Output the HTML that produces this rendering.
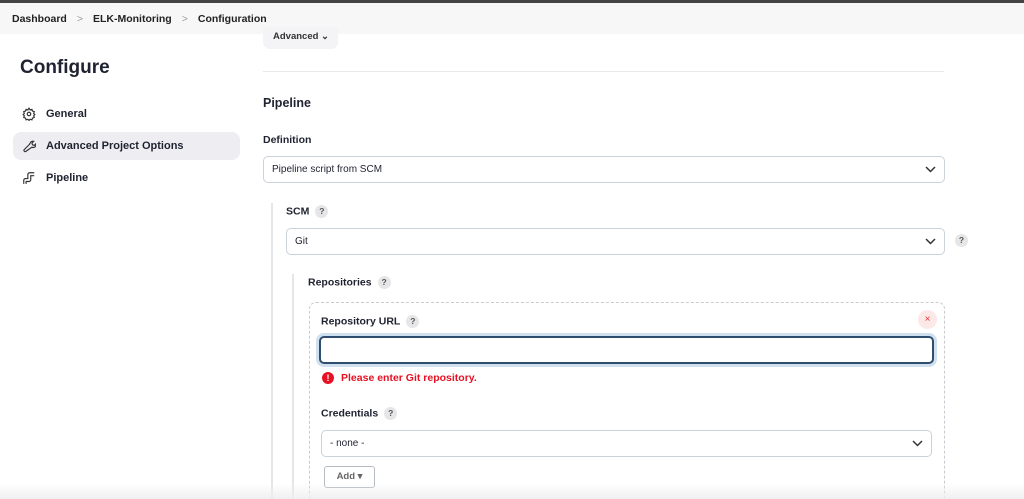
<!DOCTYPE html>
<html style="overflow:hidden;width:1024px;height:499px"><head><style>
*{box-sizing:border-box;margin:0;padding:0}
body{width:1024px;height:499px;overflow:hidden;background:#fff;font-family:"Liberation Sans",sans-serif;color:#1f2230;position:relative}
.top{position:absolute;left:0;top:0;width:1024px;height:3px;background:#444}
.bc{position:absolute;left:0;top:3px;width:1024px;height:31px;background:#f7f7f8;font-size:10.5px;font-weight:bold;display:flex;align-items:center;padding-left:12px;color:#222}
.bc .s{color:#999;margin:0 10px;font-weight:normal}
.abs{position:absolute}
h1{position:absolute;left:20px;top:57px;font-size:19px;font-weight:bold}
.nav{position:absolute;left:13px;width:227px;height:28px;border-radius:8px;font-size:11px;font-weight:bold;display:flex;align-items:center;padding-left:33px}
.nav svg{position:absolute;left:9px;top:7px}
.lbl{position:absolute;font-size:11px;font-weight:bold}
.q{display:inline-block;width:13px;height:13px;border-radius:50%;background:#e6e6e8;color:#555;font-size:8.5px;text-align:center;line-height:13px;margin-left:6px;vertical-align:middle;font-weight:bold}
.sel{position:absolute;height:27px;border:1px solid #c9d1d9;border-radius:5px;font-size:10px;padding-left:8px;display:flex;align-items:center;background:#fff}
.sel svg{position:absolute;right:8px;top:9px}
</style></head><body>
<div class="top"></div>
<div class="bc">Dashboard<span class="s">&gt;</span>ELK-Monitoring<span class="s">&gt;</span>Configuration</div>
<div class="abs" style="left:263px;top:27px;width:75px;height:22px;background:#f4f4f6;border-radius:0 0 7px 7px;font-size:9.5px;font-weight:bold;padding:4px 0 0 10px;color:#333">Advanced ⌄</div>
<div class="abs" style="left:263px;top:71px;width:681px;height:1px;background:#e8e8ea"></div>
<h1>Configure</h1>
<div class="nav" style="top:100px">
<svg width="14" height="14" viewBox="0 0 24 24" fill="none" stroke="#333" stroke-width="2"><circle cx="12" cy="12" r="3"/><path d="M12 2l2 3 3-1 1 3 3 1-1 3 2 2-2 2 1 3-3 1-1 3-3-1-2 2-2-2-3 1-1-3-3-1 1-3-2-2 2-2-1-3 3-1 1-3 3 1z"/></svg>General</div>
<div class="nav" style="top:132px;background:#eeeef2">
<svg width="14" height="14" viewBox="0 0 24 24" fill="none" stroke="#333" stroke-width="2"><path d="M14 7a5 5 0 0 1 6-3l-3 3 1 3 3 1 3-3a5 5 0 0 1-7 6L7 21a2 2 0 0 1-3-3l9-9a5 5 0 0 1 1-2z"/></svg>Advanced Project Options</div>
<div class="nav" style="top:164px">
<svg width="14" height="14" viewBox="0 0 24 24" fill="none" stroke="#333" stroke-width="2"><path d="M3 22v-6a3 3 0 0 1 3-3h4V6a3 3 0 0 1 3-3h8M7 22v-4h5a3 3 0 0 0 3-3V8h6"/></svg>Pipeline</div>
<div class="lbl" style="left:263px;top:96px;font-size:12.5px">Pipeline</div>
<div class="lbl" style="left:263px;top:134px;font-size:10.5px">Definition</div>
<div class="sel" style="left:263px;top:156px;width:682px">Pipeline script from SCM<svg width="11" height="8" viewBox="0 0 11 8"><path d="M1 1l4.5 4.5L10 1" stroke="#333" stroke-width="1.5" fill="none"/></svg></div>
<div class="abs" style="left:271px;top:203px;width:2px;height:296px;background:#e4e6ea"></div>
<div class="lbl" style="left:286px;top:205px;font-size:10.5px">SCM<span class="q">?</span></div>
<div class="sel" style="left:286px;top:228px;width:659px">Git<svg width="11" height="8" viewBox="0 0 11 8"><path d="M1 1l4.5 4.5L10 1" stroke="#333" stroke-width="1.5" fill="none"/></svg></div>
<span class="q abs" style="left:955px;top:234px;margin:0">?</span>
<div class="abs" style="left:292px;top:274px;width:2px;height:225px;background:#e4e6ea"></div>
<div class="lbl" style="left:308px;top:276px;font-size:10.5px">Repositories<span class="q">?</span></div>
<div class="abs" style="left:309px;top:302px;width:636px;height:210px;border:1px dashed #c8ccd2;border-radius:7px"></div>
<div class="abs" style="left:918px;top:310px;width:19px;height:19px;border-radius:50%;background:#fde8e8;color:#e33;font-size:10px;text-align:center;line-height:19px">×</div>
<div class="lbl" style="left:321px;top:315px;font-size:10.5px">Repository URL<span class="q">?</span></div>
<div class="abs" style="left:319px;top:336px;width:615px;height:28px;border:2px solid #2f4d6e;border-radius:5px;box-shadow:0 0 0 3px #cfe0ef"></div>
<div class="abs" style="left:322px;top:372px;width:12px;height:12px;border-radius:50%;background:#e81123;color:#fff;font-size:9px;font-weight:bold;text-align:center;line-height:12px">!</div>
<div class="abs" style="left:341px;top:372px;font-size:10.5px;color:#e81123;font-weight:bold">Please enter Git repository.</div>
<div class="lbl" style="left:321px;top:407px;font-size:10.5px">Credentials<span class="q">?</span></div>
<div class="sel" style="left:321px;top:430px;width:611px">- none -<svg width="11" height="8" viewBox="0 0 11 8"><path d="M1 1l4.5 4.5L10 1" stroke="#333" stroke-width="1.5" fill="none"/></svg></div>
<div class="abs" style="left:324px;top:466px;width:51px;height:22px;border:1px solid #b7bcc4;border-radius:3px;font-size:9.5px;font-weight:bold;color:#666;text-align:center;line-height:20px">Add ▾</div>
<div class="abs" style="left:0;top:484px;width:1024px;height:15px;background:linear-gradient(rgba(240,240,242,0),rgba(238,238,240,.9))"></div>
</body></html>
